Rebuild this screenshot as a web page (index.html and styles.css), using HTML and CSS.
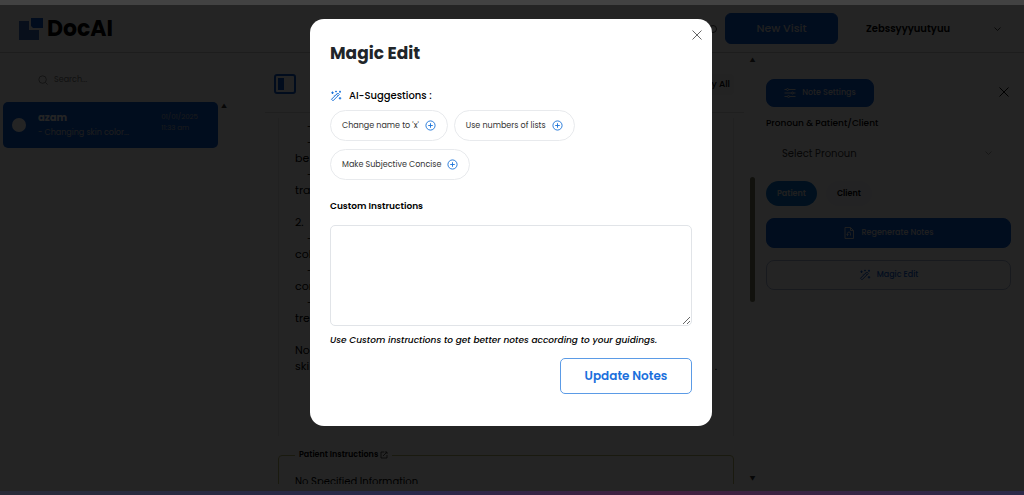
FILE: index.html
```
<!DOCTYPE html>
<html lang="en">
<head>
  <meta charset="utf-8">
  <meta name="viewport" content="width=device-width, initial-scale=1.0">
  <title>DocAI</title>
  <link rel="stylesheet" href="styles.css">
</head>
<body>
  <svg class="defs" aria-hidden="true">
    <symbol id="wand" viewBox="0 0 24 24">
      <path d="M3 18.500 15.500 6l3 3L6 21.500zM13 8.500l3 3M5 3v5M2.500 5.500h5M12 1.500v3M10.500 3h3M20 1.500v4M18 3.500h4M20 14v5M17.500 16.500h5M8 10.500l1 1"/>
    </symbol>
    <symbol id="plus" viewBox="0 0 24 24">
      <circle cx="12" cy="12" r="10"/><path d="M12 7v10M7 12h10"/>
    </symbol>
    <symbol id="chevron" viewBox="0 0 24 24"><path d="M4 8l8 8 8-8"/></symbol>
    <symbol id="cross" viewBox="0 0 24 24"><path d="M3 3l18 18M21 3L3 21"/></symbol>
  </svg>

  <div class="top-strip"></div>
  <header class="header">
    <a class="logo" href="#">
      <svg class="logo-mark" viewBox="0 0 24 22">
        <path d="M0 3h10v9h10v10H0z" fill="#3a6cc0"/>
        <path d="M12 0h12v10H14l-2-2z" fill="#0b57c9"/>
      </svg>
      <span>DocAI</span>
    </a>
    <div class="header-right">
      <svg class="icon status" viewBox="0 0 24 24"><circle cx="12" cy="12" r="7"/></svg>
      <button class="btn new-visit">New Visit</button>
      <button class="account">Zebssyyyuutyuu <svg class="icon"><use href="#chevron"/></svg></button>
    </div>
  </header>

  <main class="columns">
    <aside class="sidebar">
      <label class="search">
        <svg class="icon" viewBox="0 0 24 24"><circle cx="11" cy="11" r="9"/><path d="M18 18l5 5"/></svg>
        <input type="search" placeholder="Search..." aria-label="Search">
      </label>
      <div class="visit-row">
        <a class="visit" href="#">
          <span class="avatar"></span>
          <span class="visit-text"><b>azam</b><span>- Changing skin color...</span></span>
          <span class="visit-date">01/01/2025<br>11:33 am</span>
        </a>
        <span class="arrow">▲</span>
      </div>
    </aside>

    <section class="notes">
      <div class="notes-bar">
        <button class="panel-toggle" aria-label="Toggle panel">
          <svg viewBox="0 0 22 20"><rect x="1" y="1" width="20" height="18" rx="2" fill="none" stroke="#0b57c9" stroke-width="2"/><rect x="4" y="4" width="6" height="12" fill="#0b57c9"/></svg>
        </button>
        <button class="copy">Copy All</button>
      </div>
      <div class="notes-body">
        <p class="sub">-</p>
        <p class="sub">-</p>
        <p>be</p>
        <p class="sub">-</p>
        <p>tra</p>
        <p class="gap">2.</p>
        <p class="sub">-</p>
        <p>col</p>
        <p class="sub">-</p>
        <p>cor</p>
        <p class="sub">-</p>
        <p>tre</p>
        <p class="gap">No</p>
        <p class="last"><span>ski</span><span>.</span></p>
      </div>
      <fieldset class="patient">
        <legend>Patient Instructions <svg class="icon" viewBox="0 0 24 24"><path d="M21 12v9H3V3h10M9 15L20 4M15 3h6v6"/></svg></legend>
        <p>No Specified Information</p>
      </fieldset>
    </section>

    <div class="scroll">
      <span class="arrow">▲</span>
      <span class="thumb"></span>
      <span class="arrow">▼</span>
    </div>

    <aside class="settings">
      <div class="settings-head">
        <button class="btn note-settings">
          <svg class="icon" viewBox="0 0 24 24"><path d="M1 5h4M9 5h14M1 12h14M19 12h4M1 19h6M11 19h12"/><circle cx="7" cy="5" r="2"/><circle cx="17" cy="12" r="2"/><circle cx="9" cy="19" r="2"/></svg>
          Note Settings
        </button>
        <button class="plain" aria-label="Close settings"><svg class="icon"><use href="#cross"/></svg></button>
      </div>
      <label for="pronoun">Pronoun &amp; Patient/Client</label>
      <div class="select">
        <select id="pronoun"><option>Select Pronoun</option></select>
        <svg class="icon"><use href="#chevron"/></svg>
      </div>
      <div class="pills">
        <button class="pill active">Patient</button>
        <button class="pill">Client</button>
      </div>
      <button class="btn wide">
        <svg class="icon" viewBox="0 0 24 24"><path d="M4 1h11l6 6v16H4zM15 1v6h6M9 17v-4a3 3 0 0 1 6 0v4M7 15l2 2 2-2"/></svg>
        Regenerate Notes
      </button>
      <button class="btn wide outline"><svg class="icon"><use href="#wand"/></svg> Magic Edit</button>
    </aside>
  </main>
  <div class="bottom-strip"></div>

  <div class="overlay">
    <div class="modal" role="dialog" aria-labelledby="modal-title">
      <button class="plain close" aria-label="Close"><svg class="icon"><use href="#cross"/></svg></button>
      <h1 id="modal-title">Magic Edit</h1>
      <h2><svg class="icon"><use href="#wand"/></svg> AI-Suggestions :</h2>
      <div class="chips">
        <button class="chip">Change name to 'x' <svg class="icon"><use href="#plus"/></svg></button>
        <button class="chip">Use numbers of lists <svg class="icon"><use href="#plus"/></svg></button>
        <button class="chip">Make Subjective Concise <svg class="icon"><use href="#plus"/></svg></button>
      </div>
      <label for="instructions">Custom Instructions</label>
      <textarea id="instructions"></textarea>
      <p class="hint">Use Custom instructions to get better notes according to your guidings.</p>
      <button class="update">Update Notes</button>
    </div>
  </div>
</body>
</html>
```
FILE: styles.css
```
* { box-sizing: border-box; }
body {
  display: flex;
  flex-direction: column;
  height: 100vh;
  margin: 0;
  overflow: hidden;
  background: #fff;
  color: #000;
  font-family: Poppins, Inter, sans-serif;
  font-size: 10px;
}
button, input, select, textarea { font: inherit; color: inherit; }
button { cursor: pointer; }
p { margin: 0; }
.defs { position: absolute; width: 0; height: 0; }
.icon {
  width: 12px;
  height: 12px;
  flex: none;
  fill: none;
  stroke: currentColor;
  stroke-width: 2;
}
.plain {
  display: flex;
  padding: 0;
  border: 0;
  background: none;
}
.btn {
  display: flex;
  align-items: center;
  justify-content: center;
  gap: 6px;
  border: 1px solid #0b5bd3;
  border-radius: 6px;
  background: #0b5bd3;
  color: #ddd;
}

/* strips stay above the overlay */
.top-strip, .bottom-strip {
  position: relative;
  z-index: 2;
  flex: none;
  height: 5px;
  background: #424242;
}
.bottom-strip {
  height: 4px;
  background: linear-gradient(90deg, #292b38, #29294a 40%, #43203f 65%, #2b2a48);
}

.header {
  display: flex;
  align-items: center;
  justify-content: space-between;
  flex: none;
  height: 48px;
  padding: 0 22px 0 19px;
  border-bottom: 1px solid #ccc;
}
.logo {
  display: flex;
  align-items: center;
  gap: 4px;
  color: #000;
  font-size: 22px;
  font-weight: 700;
  text-decoration: none;
}
.logo-mark { width: 24px; height: 22px; }
.header-right { display: flex; align-items: center; }
.status { margin-right: 6px; color: #444; }
.new-visit {
  width: 113px;
  height: 31px;
  margin-right: 28px;
  font-size: 11px;
  font-weight: 500;
}
.account {
  display: flex;
  align-items: center;
  justify-content: space-between;
  width: 136px;
  padding: 0;
  border: 0;
  background: none;
  font-weight: 600;
}
.account .icon { width: 9px; }

.columns {
  display: grid;
  grid-template-columns: 265px 1fr 20px 260px;
  flex: 1;
  min-height: 0;
}
.arrow { color: #333; font-size: 6px; line-height: 8px; }

.search {
  display: flex;
  align-items: center;
  gap: 6px;
  height: 49px;
  padding: 4px 38px 0;
  color: #777;
}
.search .icon { width: 10px; }
.search input {
  width: 100%;
  padding: 0;
  border: 0;
  background: none;
  font-size: 8px;
}
.search input::placeholder { color: #777; }
.visit-row { display: flex; gap: 3px; padding-left: 3px; }
.visit {
  display: flex;
  align-items: center;
  width: 215px;
  height: 46px;
  padding: 0 20px 0 9px;
  border-radius: 5px;
  background: #0b5bd3;
  color: #ccc;
  font-size: 8px;
  line-height: 15px;
  text-decoration: none;
}
.avatar {
  width: 14px;
  height: 14px;
  margin-right: 12px;
  border-radius: 50%;
  background: #fff;
}
.visit-text { display: flex; flex: 1; flex-direction: column; white-space: nowrap; }
.visit-text b { color: #fff; font-size: 10px; }
.visit-date { align-self: flex-start; padding-top: 9px; color: #bbb; font-size: 7px; line-height: 11px; }

.notes {
  display: flex;
  flex-direction: column;
  min-width: 0;
  min-height: 0;
  margin-bottom: 7px;
  overflow: hidden;
}
.notes-bar {
  display: flex;
  align-items: center;
  justify-content: space-between;
  flex: none;
  height: 60px;
  padding: 3px 10px 0 9px;
  border-bottom: 1px solid #ddd;
}
.panel-toggle { width: 22px; height: 20px; padding: 0; border: 0; background: none; }
.panel-toggle svg { display: block; }
.copy { padding: 4px; border: 0; border-radius: 4px; background: #f4f4f4; font-size: 9px; font-weight: 500; }
.notes-body {
  flex: none;
  height: 318px;
  margin: 5px 10px 0 13px;
  padding: 0 16px;
  border: solid #e6e6e6;
  border-width: 0 1px;
  font-size: 11px;
  line-height: 16px;
}
.sub { padding-left: 12px; }
.notes-body .gap { margin-top: 16px; }
.last { display: flex; justify-content: space-between; }
.patient {
  flex: none;
  margin: 12px 10px 0 13px;
  padding: 12px 16px;
  border: 1px solid #b5b56a;
  border-radius: 4px;
  font-size: 10px;
}
.patient legend { padding: 0 4px; font-size: 8px; font-weight: 600; line-height: 14px; }
.patient legend .icon { width: 8px; height: 8px; vertical-align: middle; }

.scroll {
  display: flex;
  flex-direction: column;
  align-items: center;
  justify-content: space-between;
  padding: 3px 3px 8px 0;
}
.thumb { width: 5px; height: 125px; margin-bottom: 60px; border-radius: 3px; background: #77775c; }

.settings { padding: 26px 13px 0 2px; }
.settings-head { display: flex; align-items: center; justify-content: space-between; }
.note-settings { width: 108px; height: 28px; border-radius: 8px; font-size: 8px; font-weight: 500; }
.settings-head .plain { padding: 0 1px 3px 0; }
.settings label { display: block; margin-top: 8px; font-size: 9px; line-height: 16px; font-weight: 500; }
.select {
  display: flex;
  align-items: center;
  height: 30px;
  margin-top: 7px;
  padding: 0 18px 0 16px;
  color: #333;
}
.select select { flex: 1; padding: 0; border: 0; background: none; appearance: none; }
.select .icon { width: 9px; color: #888; }
.pills { display: flex; gap: 9px; margin: 13px 0 12px; }
.pill {
  height: 25px;
  padding: 0 11px;
  border: 0;
  border-radius: 13px;
  background: #f5f5fa;
  font-size: 8px;
  font-weight: 600;
}
.pill.active { background: #0875d1; color: #ddd; }
.wide { width: 100%; height: 30px; margin-bottom: 12px; border-radius: 8px; font-size: 8px; font-weight: 500; }
.outline { background: none; color: #0b5bd3; border-color: #a9b9d6; }

.overlay {
  position: fixed;
  inset: 0;
  display: flex;
  align-items: flex-start;
  justify-content: center;
  padding: 19px 2px 0 0;
  background: rgba(0, 0, 0, 0.86);
}
.modal {
  position: relative;
  display: flex;
  flex-direction: column;
  width: 402px;
  max-width: 100%;
  padding: 20px 20px 32px;
  border-radius: 14px;
  background: #fff;
}
.close { position: absolute; top: 10px; right: 9px; color: #666; }
.modal h1 { margin: 0; color: #212529; font-size: 17px; line-height: 28px; }
.modal h2 {
  display: flex;
  align-items: center;
  gap: 7px;
  margin: 20px 0 5px;
  font-size: 10px;
  font-weight: 500;
  line-height: 18px;
}
.modal h2 .icon, .chip .icon { color: #1a73d9; }
.chips { display: flex; flex-wrap: wrap; gap: 8px 6px; }
.chip {
  display: flex;
  align-items: center;
  gap: 6px;
  height: 31px;
  padding: 0 11px;
  border: 1px solid #e8eaed;
  border-radius: 16px;
  background: #fff;
  color: #333;
  font-size: 8px;
}
.chip .icon { width: 11px; height: 11px; }
.modal label { margin: 18px 0 11px; font-size: 9px; font-weight: 600; line-height: 16px; }
.modal textarea {
  height: 101px;
  border: 1px solid #e1e4e8;
  border-radius: 5px;
  background: #fff;
  resize: vertical;
}
.hint { margin: 5px 0 9px; font-size: 9px; font-style: italic; font-weight: 500; line-height: 18px; }
.update {
  align-self: flex-end;
  width: 132px;
  height: 36px;
  border: 1px solid #5b9be6;
  border-radius: 5px;
  background: #fff;
  color: #1a6fdc;
  font-size: 12px;
  font-weight: 600;
}
```
